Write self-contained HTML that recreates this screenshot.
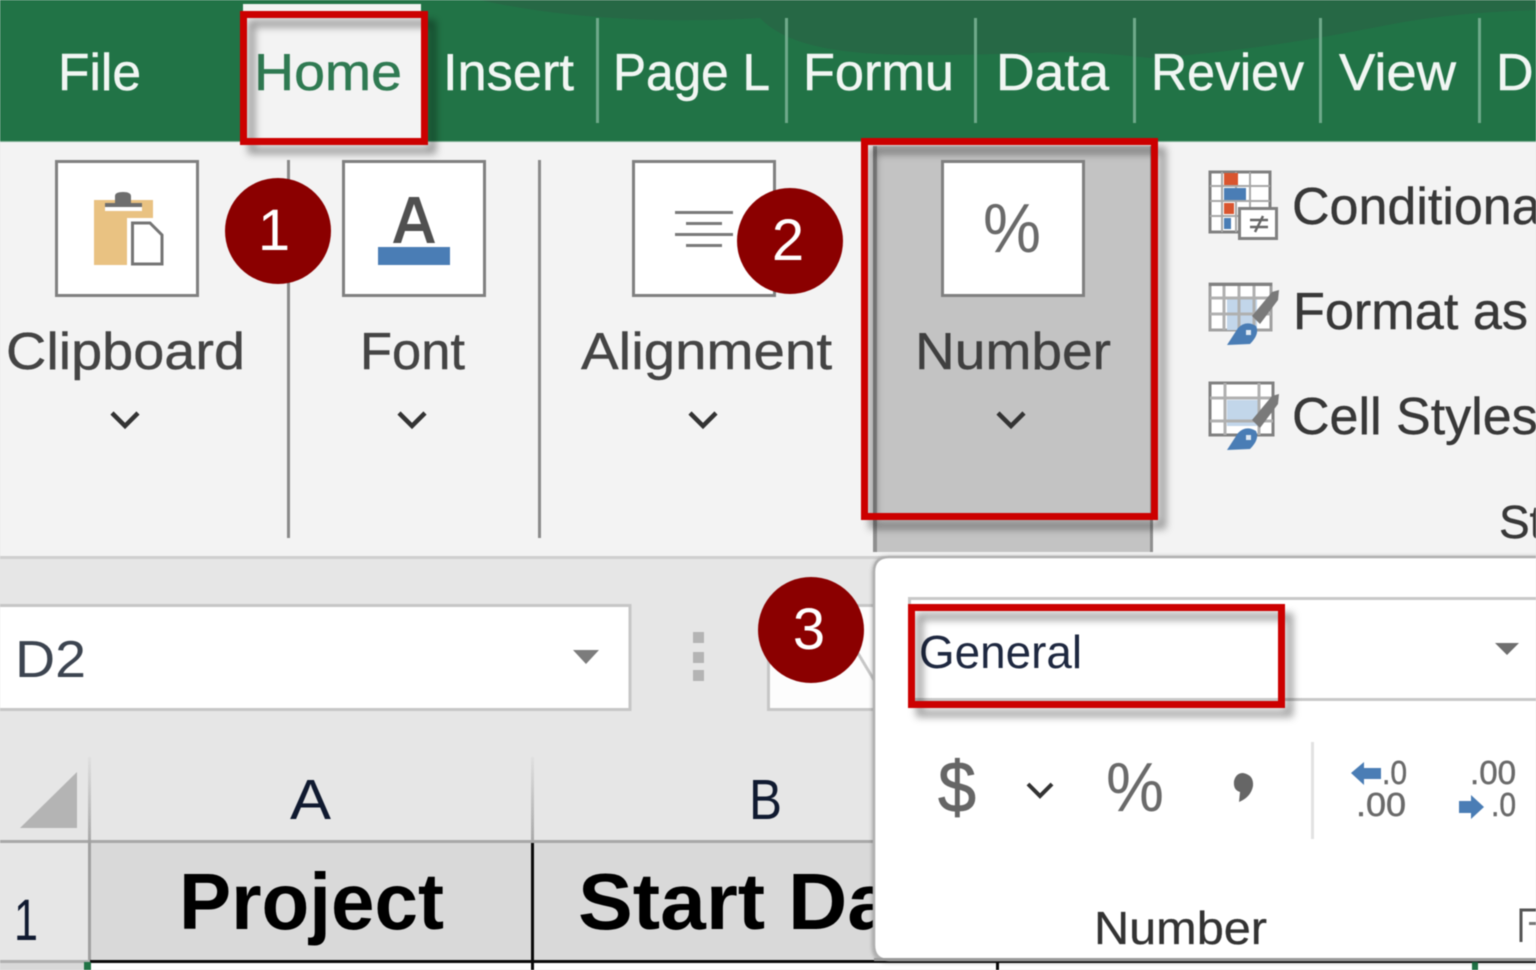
<!DOCTYPE html>
<html lang="en">
<head>
<meta charset="utf-8">
<title>Excel Number Format</title>
<style>
html,body{margin:0;padding:0;background:#e6e6e6;overflow:hidden}
svg{display:block;width:1536px;height:970px;filter:blur(.55px)}
text{font-family:"Liberation Sans",sans-serif}
</style>
</head>
<body>
<svg xmlns="http://www.w3.org/2000/svg" width="1536" height="970" viewBox="0 0 1536 970">
<defs>
<filter id="sh" x="-10%" y="-10%" width="125%" height="125%"><feDropShadow dx="8" dy="9" stdDeviation="4" flood-color="#000" flood-opacity=".38"/></filter>
<filter id="pop" x="-3%" y="-3%" width="106%" height="106%"><feDropShadow dx="0" dy="1" stdDeviation="2" flood-color="#000" flood-opacity=".35"/></filter>
<clipPath id="pclip"><rect x="0" y="840" width="874" height="121"/></clipPath>
<linearGradient id="sep" x1="0" y1="0" x2="0" y2="1"><stop offset="0" stop-color="#e0e0e0"/><stop offset="1" stop-color="#a8a8a8"/></linearGradient>
</defs>

<!-- base -->
<rect width="1536" height="970" fill="#e6e6e6"/>

<!-- title green -->
<rect width="1536" height="141" fill="#217346"/>
<path d="M480 0C560 18 660 24 760 18C800 60 900 56 1000 54C1060 52 1080 50 1150 58C1240 52 1320 38 1372 28C1440 14 1490 12 1536 10V0Z" fill="#266845"/>
<rect x="0" y="141" width="1536" height="1" fill="#7fb095"/>

<!-- ribbon -->
<rect y="142" width="1536" height="414" fill="#f3f3f3"/>
<rect y="556" width="1536" height="3" fill="#cfcfcf"/>

<!-- home tab -->
<rect x="243" y="4" width="178" height="138" fill="#f3f3f3"/>

<!-- tab separators -->
<g fill="#6fa98a">
<rect x="596" y="18" width="3" height="105"/>
<rect x="785" y="18" width="3" height="105"/>
<rect x="974" y="18" width="3" height="105"/>
<rect x="1133" y="18" width="3" height="105"/>
<rect x="1319" y="18" width="3" height="105"/>
<rect x="1478" y="18" width="3" height="105"/>
</g>

<!-- tabs -->
<g font-size="52" fill="#f1f6f3" stroke="#f1f6f3" stroke-width=".5">
<text x="58" y="90" textLength="83" lengthAdjust="spacingAndGlyphs">File</text>
<text x="254" y="90" textLength="148" lengthAdjust="spacingAndGlyphs" fill="#2f7a52" stroke="#2f7a52">Home</text>
<text x="443" y="90" textLength="131" lengthAdjust="spacingAndGlyphs">Insert</text>
<text x="613" y="90" textLength="157" lengthAdjust="spacingAndGlyphs">Page L</text>
<text x="803" y="90" textLength="151" lengthAdjust="spacingAndGlyphs">Formu</text>
<text x="996" y="90" textLength="113" lengthAdjust="spacingAndGlyphs">Data</text>
<text x="1151" y="90" textLength="153" lengthAdjust="spacingAndGlyphs">Reviev</text>
<text x="1339" y="90" textLength="117" lengthAdjust="spacingAndGlyphs">View</text>
<text x="1496" y="90">D</text>
</g>

<!-- dividers -->
<rect x="287" y="160" width="3" height="378" fill="#8a8a8a"/>
<rect x="538" y="160" width="3" height="378" fill="#8a8a8a"/>

<!-- number highlight -->
<rect x="875" y="146" width="277" height="406" fill="#c3c3c3"/>
<rect x="873" y="146" width="4" height="406" fill="#8f8f8f"/>
<rect x="1150" y="146" width="3" height="406" fill="#8f8f8f"/>

<!-- icon boxes -->
<g fill="#fff" stroke="#808080" stroke-width="3">
<rect x="56.500" y="161.500" width="141" height="134"/>
<rect x="343.500" y="161.500" width="141" height="134"/>
<rect x="633.500" y="161.500" width="141" height="134"/>
<rect x="942.500" y="161.500" width="141" height="134"/>
</g>

<!-- clipboard icon -->
<rect x="94" y="200" width="59" height="65" fill="#e9c282"/>
<path d="M105 207V203H115V196Q115 192 123 192Q131 192 131 196V203H142V207Z" fill="#6e6e6e"/>
<rect x="105" y="207" width="37" height="4" fill="#fff"/>
<rect x="127" y="218" width="40" height="48" fill="#fff"/>
<path d="M132.500 264V223H150L162 235V264Z" fill="#fff" stroke="#757575" stroke-width="3"/>

<!-- font icon -->
<path d="M393 243L409 197H419L435 243H427L423 231H405L401 243ZM407 224H421L414 204Z" fill="#505050"/>
<rect x="378" y="247" width="72" height="18" fill="#4a7db5"/>

<!-- alignment icon -->
<g fill="#7a7a7a">
<rect x="675" y="211" width="58" height="3"/>
<rect x="686" y="222" width="36" height="3"/>
<rect x="675" y="233" width="58" height="3"/>
<rect x="686" y="244" width="36" height="3"/>
</g>

<!-- percent big -->
<text x="983" y="252" font-size="70" fill="#6a6a6a" textLength="58" lengthAdjust="spacingAndGlyphs">%</text>

<!-- group labels -->
<g font-size="52" fill="#444" stroke="#444" stroke-width=".4">
<text x="6" y="369" textLength="239" lengthAdjust="spacingAndGlyphs">Clipboard</text>
<text x="360" y="369" textLength="105" lengthAdjust="spacingAndGlyphs">Font</text>
<text x="581" y="369" textLength="251" lengthAdjust="spacingAndGlyphs">Alignment</text>
<text x="915" y="369" textLength="196" lengthAdjust="spacingAndGlyphs" fill="#3f3f3f">Number</text>
</g>

<!-- chevrons -->
<g fill="none" stroke="#333" stroke-width="4.500">
<path d="M112 413L125 426L138 413"/>
<path d="M399 413L412 426L425 413"/>
<path d="M690 413L703 426L716 413"/>
<path d="M998 413L1011 426L1024 413"/>
</g>

<!-- styles column icons -->
<g>
<rect x="1210" y="172" width="60" height="60" fill="#fff" stroke="#808080" stroke-width="3"/>
<g stroke="#a8a8a8" stroke-width="2"><path d="M1222 172V232M1236 172V232M1250 172V232M1210 186H1270M1210 201H1270M1210 216H1270"/></g>
<rect x="1224" y="173" width="14" height="12" fill="#d9552f"/>
<rect x="1224" y="188" width="22" height="12" fill="#4a7db5"/>
<rect x="1224" y="203" width="10" height="11" fill="#d9552f"/>
<rect x="1224" y="218" width="7" height="11" fill="#4a7db5"/>
<rect x="1239.500" y="208.500" width="37" height="30" fill="#fff" stroke="#808080" stroke-width="3"/>
<path d="M1250 220H1268M1250 227H1268M1263 216L1255 232" stroke="#666" stroke-width="2.500" fill="none"/>

<rect x="1210" y="284" width="61" height="46" fill="#fff" stroke="#a0a0a0" stroke-width="3"/>
<rect x="1227" y="298" width="30" height="32" fill="#c2d6ea"/>
<g stroke="#b0b0b0" stroke-width="3"><path d="M1224 284V330M1239 284V330M1254 284V330M1210 298H1271M1210 314H1271"/></g>
<rect x="1209" y="283" width="63" height="3" fill="#808080"/>
<path d="M1252 316L1272 292L1279 290L1278 300L1260 324Z" fill="#7a7a7a"/>
<path d="M1227 345L1238 328Q1246 320 1256 326Q1260 334 1250 344Z" fill="#4a7db5"/>
<rect x="1246" y="330" width="5" height="5" fill="#dfe9f3"/>

<rect x="1210" y="383" width="63" height="52" fill="#fff" stroke="#808080" stroke-width="3"/>
<rect x="1227" y="400" width="32" height="26" fill="#c2d6ea"/>
<g stroke="#b0b0b0" stroke-width="3"><path d="M1225 383V435M1259 383V435M1210 398H1273M1210 421H1273"/></g>
<path d="M1252 420L1272 396L1279 394L1278 404L1260 428Z" fill="#7a7a7a"/>
<path d="M1227 450L1238 433Q1246 425 1256 431Q1260 439 1250 449Z" fill="#4a7db5"/>
<rect x="1246" y="435" width="5" height="5" fill="#dfe9f3"/>
</g>

<g font-size="52" fill="#383838" stroke="#383838" stroke-width=".4">
<text x="1292" y="224">Conditional</text>
<text x="1293" y="329" textLength="235" lengthAdjust="spacingAndGlyphs">Format as</text>
<text x="1292" y="434">Cell Styles</text>
<text x="1499" y="538" font-size="46">St</text>
</g>

<!-- name box -->
<rect x="-4" y="605.500" width="634" height="104" fill="#fff" stroke="#c6c6c6" stroke-width="3"/>
<text x="15" y="677" font-size="52" fill="#3c4450" textLength="71" lengthAdjust="spacingAndGlyphs">D2</text>
<path d="M573 650H599L586 664Z" fill="#7c7c7c"/>
<g fill="#b4b4b4">
<rect x="693" y="632" width="11" height="11"/>
<rect x="693" y="652" width="11" height="11"/>
<rect x="693" y="670" width="11" height="11"/>
</g>
<rect x="768.500" y="605.500" width="120" height="104" fill="#fdfdfd" stroke="#c6c6c6" stroke-width="3"/>
<path d="M856 650L874 680" stroke="#c6c6c6" stroke-width="3"/>

<!-- sheet headers -->
<path d="M20 828H77V772Z" fill="#b4b4b4"/>
<rect x="88" y="757" width="3" height="85" fill="url(#sep)"/>
<rect x="531" y="757" width="3" height="85" fill="url(#sep)"/>
<rect x="0" y="840" width="880" height="3" fill="#a8a8a8"/>
<text x="290" y="819" font-size="57" fill="#101a30" textLength="41" lengthAdjust="spacingAndGlyphs">A</text>
<text x="749" y="819" font-size="57" fill="#101a30" textLength="33" lengthAdjust="spacingAndGlyphs">B</text>

<!-- row 1 -->
<rect x="90" y="843" width="800" height="117" fill="#d9d9d9"/>
<rect x="88" y="840" width="3" height="122" fill="#a0a0a0"/>
<rect x="531" y="843" width="3" height="120" fill="#0a0a0a"/>
<text x="14" y="940" font-size="58" fill="#101a30" textLength="24" lengthAdjust="spacingAndGlyphs">1</text>
<g clip-path="url(#pclip)" font-size="80" fill="#000">
<text x="179" y="929" font-weight="700" textLength="265" lengthAdjust="spacingAndGlyphs">Project</text>
<text x="578" y="929" font-weight="700" textLength="388" lengthAdjust="spacingAndGlyphs">Start Date</text>
</g>
<rect x="0" y="960" width="90" height="10" fill="#d9d9d9"/>
<rect x="0" y="960" width="90" height="3" fill="#b0b0b0"/>
<rect x="90" y="963" width="1446" height="7" fill="#fff"/>
<rect x="90" y="960" width="1446" height="3" fill="#0a0a0a"/>
<rect x="531" y="960" width="3" height="10" fill="#0a0a0a"/>
<rect x="996" y="960" width="3" height="10" fill="#0a0a0a"/>
<rect x="84" y="962" width="7" height="8" fill="#217346"/>
<rect x="1472" y="962" width="6" height="8" fill="#217346"/>

<!-- popup -->
<path d="M889 557H1540V960H889Q874 960 874 945V572Q874 557 889 557Z" fill="#fff" stroke="#b0b0b0" stroke-width="2.500" filter="url(#pop)"/>
<rect x="874" y="958" width="662" height="3" fill="#999"/>
<rect x="908" y="597" width="628" height="3" fill="#c8c8c8"/>
<rect x="908" y="698" width="628" height="3" fill="#c8c8c8"/>
<rect x="908" y="597" width="3" height="104" fill="#c8c8c8"/>
<path d="M1495 643H1519L1507 655Z" fill="#6f6f6f"/>
<text x="919" y="668" font-size="46" fill="#1e2840" textLength="163" lengthAdjust="spacingAndGlyphs">General</text>

<text x="938" y="812" font-size="72" fill="#666" stroke="#666" stroke-width=".8" textLength="38" lengthAdjust="spacingAndGlyphs">$</text>
<path d="M1028 784L1040 796L1052 784" fill="none" stroke="#333" stroke-width="4"/>
<text x="1106" y="811" font-size="70" fill="#6a6a6a" textLength="58" lengthAdjust="spacingAndGlyphs">%</text>
<path d="M1243 773Q1254 775 1253 786Q1251 797 1239 802L1240 792Q1233 790 1234 781Q1236 773 1243 773Z" fill="#666"/>
<rect x="1311" y="742" width="3" height="97" fill="#e2e2e2"/>

<g font-size="33" fill="#6a6a6a" stroke="#6a6a6a" stroke-width=".5">
<text x="1382" y="784" textLength="25" lengthAdjust="spacingAndGlyphs">.0</text>
<text x="1356" y="816" textLength="50" lengthAdjust="spacingAndGlyphs">.00</text>
<text x="1470" y="784" textLength="46" lengthAdjust="spacingAndGlyphs">.00</text>
<text x="1491" y="816" textLength="25" lengthAdjust="spacingAndGlyphs">.0</text>
</g>
<path d="M1351 773L1364 762V768H1381V779H1364V785Z" fill="#4a7db5"/>
<path d="M1484 807L1471 795V801H1459V813H1471V819Z" fill="#4a7db5"/>

<text x="1094" y="944" font-size="46" fill="#333" stroke="#333" stroke-width=".3" textLength="173" lengthAdjust="spacingAndGlyphs">Number</text>
<path d="M1536 910H1521V942" fill="none" stroke="#555" stroke-width="3"/>
<rect x="1529" y="922" width="7" height="3" fill="#777"/>

<!-- red callouts -->
<g fill="none" stroke="#cc0000" stroke-width="7" filter="url(#sh)">
<rect x="243.500" y="14.500" width="181" height="127"/>
<rect x="864.500" y="141.500" width="290" height="375"/>
<rect x="911.500" y="607.500" width="370" height="97"/>
</g>

<!-- badges -->
<g fill="#8b0000">
<ellipse cx="278" cy="231" rx="53" ry="53"/>
<ellipse cx="790" cy="241" rx="53" ry="53"/>
<ellipse cx="811" cy="630" rx="53" ry="53"/>
</g>
<g font-size="58" fill="#fff" text-anchor="middle">
<text x="274" y="250">1</text>
<text x="788" y="260">2</text>
<text x="809" y="649">3</text>
</g>
</svg>
</body>
</html>
